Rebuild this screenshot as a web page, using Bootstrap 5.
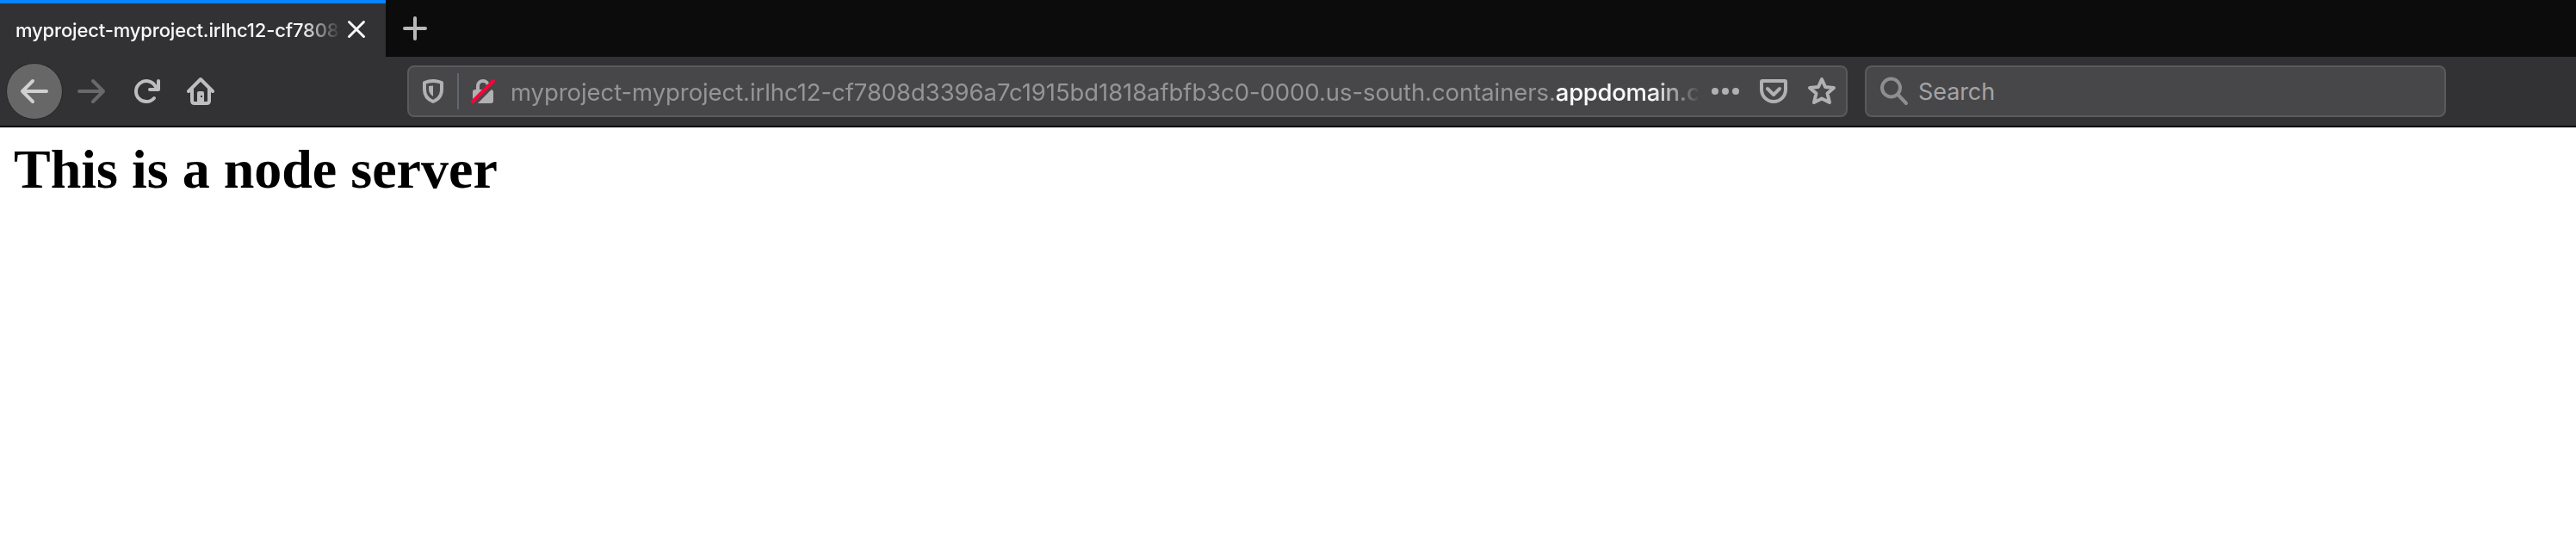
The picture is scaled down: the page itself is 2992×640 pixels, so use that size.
<!DOCTYPE html>
<html lang="en">
<head>
<meta charset="utf-8">
<meta name="viewport" content="width=device-width, initial-scale=1">
<title>myproject</title>
<link href="https://cdn.jsdelivr.net/npm/bootstrap@5.3.0/dist/css/bootstrap.min.css" rel="stylesheet">
<style>
body{font-family:Inter,"Liberation Sans",sans-serif;color:#000;background:#fff}
svg{display:block;flex:none;fill:none;stroke-linecap:round;stroke-linejoin:round}
.tabstrip{height:66px;background:#0c0c0d}
.tab-item{width:448px;background:#323234;border-top:4px solid #0a84ff;padding:0 22px 0 18px}
.tab-title{width:376px;font-size:22px;font-weight:500;line-height:60px;color:#f9f9fa;letter-spacing:-.15px;-webkit-mask-image:linear-gradient(to right,#000 332px,transparent 378px)}
.tab-close{margin:0 0 2px 9px}
.new-tab{margin-left:19px}
.toolbar{height:82px;background:#323234;border-bottom:2px solid #0c0c0d}
.round-btn{width:66px;height:66px;background:#676767;border:1px solid #252526;margin-left:7px}
.ic-forward{margin-left:16px}
.ic-reload{margin-left:32px}
.ic-home{margin-left:28px}
.field{height:60px;background:#474749;border:2px solid #5a5a5c;border-radius:8px}
.address{width:1673px;margin-left:222px}
.finder{width:675px;margin-left:20px}
.ic-shield,.vline,.ic-dots{margin-left:15px}
.ic-lock{margin-left:13px}
.ic-pocket,.ic-star{margin-left:22px}
.vline{width:2px;height:42px;background:#5f6670}
.url-text{width:1379px;margin-left:17px;padding-top:2px;font-size:27.5px;letter-spacing:-.08px;line-height:56px;color:#959596;-webkit-mask-image:linear-gradient(to right,#000 1326px,transparent 1382px)}
.url-text b{font-weight:500;color:#f9f9fa;letter-spacing:-.3px}
.ic-search{margin-left:16px}
.find-text{padding-top:3px;margin-left:10px;font-size:27px;letter-spacing:-.1px;color:#a4a4a5}
.headline{font:bold 64px/74px "Liberation Serif",serif;margin:12px 0 0 16px}
</style>
</head>
<body>
<header>
<div class="tabstrip d-flex">
 <div class="tab-item d-flex align-items-center">
  <div class="tab-title text-nowrap">myproject-myproject.irlhc12-cf7808</div>
  <svg class="tab-close" width="22" height="22" viewBox="0 0 22 22" stroke="#f9f9fa" stroke-width="3"><path d="M2.500 2.500l17 17M19.500 2.500l-17 17"/></svg>
 </div>
 <svg class="new-tab align-self-center" width="30" height="30" viewBox="0 0 30 30" stroke="#b9b9ba" stroke-width="4"><path d="M15 3v24M3 15h24"/></svg>
</div>
<div class="toolbar d-flex align-items-center">
 <div class="round-btn rounded-circle d-flex align-items-center justify-content-center">
  <svg width="34" height="32" viewBox="0 0 34 32" stroke="#d0d0d1" stroke-width="4"><path d="M15 4L3 16l12 12M4 16h27"/></svg>
 </div>
 <svg class="ic-forward" width="34" height="32" viewBox="0 0 34 32" stroke="#69696b" stroke-width="4"><path d="M19 4l12 12-12 12M30 16H3"/></svg>
 <svg class="ic-reload" width="34" height="32" viewBox="0 0 34 32" stroke="#bebebf" stroke-width="4"><path d="M24 24A12 12 0 1 1 25 9.500L27.500 13M29 4v10H19"/></svg>
 <svg class="ic-home" width="34" height="34" viewBox="0 0 34 34" stroke="#bebebf" stroke-width="4"><path d="M2 17L16 3l14 14M6 14v14q0 3 3 3h14q3 0 3-3V14"/><path d="M12 31V19q0-2 2-2h4q2 0 2 2v12z" fill="#bebebf" stroke="none"/><path d="M16 22h2v2h-2z" fill="#323234" stroke="none"/></svg>
 <div class="field address d-flex align-items-center">
  <svg class="ic-shield" width="26" height="30" viewBox="0 0 26 30" stroke="#b1b1b3" stroke-width="4"><path d="M3 5Q13 1 23 5v8q0 10-10 14Q3 23 3 13z"/><path d="M13 8.500v12.500q-5-3-5-9V9z" fill="#b1b1b3" stroke="none"/></svg>
  <div class="vline"></div>
  <svg class="ic-lock" width="30" height="30" viewBox="0 0 30 30"><path d="M9 14V9a6 6 0 0 1 12 0v5" stroke="#b1b1b3" stroke-width="4"/><rect x="3" y="13" width="24" height="16" rx="3" fill="#b1b1b3"/><path d="M5 30L29 6" stroke="#474749" stroke-width="4"/><path d="M3 27L27 3" stroke="#ff0039" stroke-width="4"/></svg>
  <div class="url-text text-nowrap">myproject-myproject.irlhc12-cf7808d3396a7c1915bd1818afbfb3c0-0000.us-south.containers.<b>appdomain.c</b></div>
  <svg class="ic-dots" width="34" height="10" viewBox="0 0 34 10"><g fill="#b1b1b3"><circle cx="5" cy="5" r="4"/><circle cx="17" cy="5" r="4"/><circle cx="29" cy="5" r="4"/></g></svg>
  <svg class="ic-pocket" width="34" height="30" viewBox="0 0 34 30" stroke="#b1b1b3" stroke-width="4"><path d="M4 3h26q1 0 1 1v9a14 14 0 0 1-28 0V4q0-1 1-1z"/><path d="M10 12l7 7 7-7"/></svg>
  <svg class="ic-star" width="34" height="34" viewBox="0 0 34 34" stroke="#b1b1b3" stroke-width="4"><path d="M17 3l4 9 10 1-7.500 6.500 2.500 10.500-9-4.500-9 4.500 2.500-10.500L3 13l10-1z"/></svg>
 </div>
 <div class="field finder d-flex align-items-center">
  <svg class="ic-search" width="34" height="34" viewBox="0 0 34 34" stroke="#8e8e8f" stroke-width="4"><circle cx="12.500" cy="13" r="10.500"/><path d="M20.500 21l9.500 10"/></svg>
  <span class="find-text">Search</span>
 </div>
</div>
</header>
<main><h1 class="headline">This is a node server</h1></main>
<script src="https://cdn.jsdelivr.net/npm/bootstrap@5.3.0/dist/js/bootstrap.bundle.min.js"></script>
</body>
</html>
